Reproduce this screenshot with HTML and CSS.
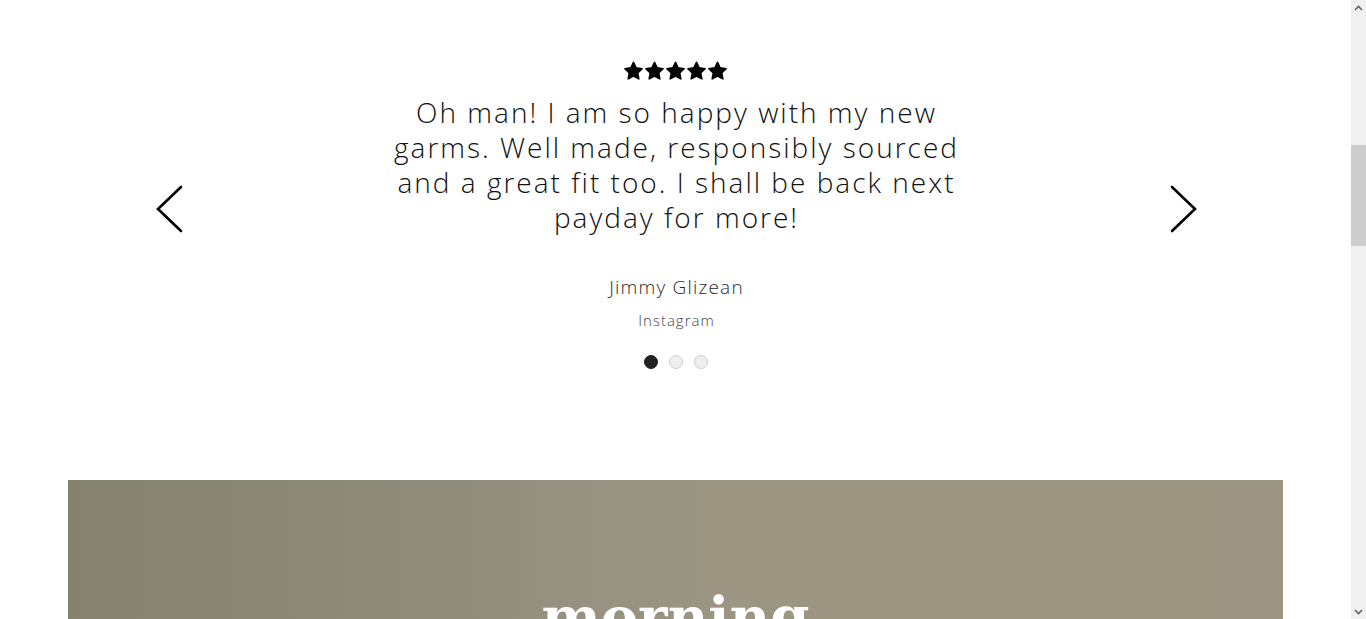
FILE: index.html
```html
<!DOCTYPE html>
<html lang="en">
<head>
<meta charset="utf-8">
<title>Testimonials</title>
<link rel="stylesheet" href="styles.css">
</head>
<body>
<div class="page">
  <main class="main">
    <section class="testimonials">
      <div class="stars" aria-label="5 stars">
        <svg viewBox="0 0 105 20" width="105" height="20">
          <defs>
            <path id="star" d="M10.5 1.4 L13.1 6.9 L19.1 7.7 L14.7 11.9 L15.8 17.9 L10.5 15 L5.2 17.9 L6.3 11.9 L1.9 7.7 L7.9 6.9 Z"/>
          </defs>
          <use href="#star" x="0"/>
          <use href="#star" x="21"/>
          <use href="#star" x="42"/>
          <use href="#star" x="63"/>
          <use href="#star" x="84"/>
        </svg>
      </div>
      <div class="slider">
        <button class="arrow" aria-label="Previous">
          <svg viewBox="0 0 28 48" width="28" height="48"><polyline points="25,2 2,24 25,46" /></svg>
        </button>
        <div class="slide">
          <p class="quote">Oh man! I am so happy with my new<br>garms. Well made, responsibly sourced<br>and a great fit too. I shall be back next<br>payday for more!</p>
          <p class="author">Jimmy Glizean</p>
          <p class="source">Instagram</p>
          <div class="dots">
            <span class="dot active"></span>
            <span class="dot"></span>
            <span class="dot"></span>
          </div>
        </div>
        <button class="arrow" aria-label="Next">
          <svg viewBox="0 0 28 48" width="28" height="48"><polyline points="3,2 26,24 3,46" /></svg>
        </button>
      </div>
    </section>
    <section class="banner">
      <h2 class="banner-title">morning</h2>
    </section>
  </main>
  <div class="scrollbar" aria-hidden="true">
    <div class="sb-btn">
      <svg viewBox="0 0 9 6" width="9" height="6"><polyline points="1,5 4.5,1.5 8,5"/></svg>
    </div>
    <div class="sb-track">
      <div class="sb-thumb"></div>
    </div>
    <div class="sb-btn">
      <svg viewBox="0 0 9 6" width="9" height="6"><polyline points="1,1 4.5,4.5 8,1"/></svg>
    </div>
  </div>
</div>
</body>
</html>
```

FILE: styles.css
```css
html, body {
  margin: 0;
  padding: 0;
  background: #fff;
}

body {
  font-family: "Open Sans", "Liberation Sans", sans-serif;
  color: #222;
  overflow: hidden;
}

.page {
  display: flex;
  height: 619px;
  overflow: hidden;
}

.main {
  flex: 1;
  min-width: 0;
  display: flex;
  flex-direction: column;
}

.testimonials {
  flex: 0 0 auto;
  padding-top: 61px;
  display: flex;
  flex-direction: column;
  align-items: center;
  height: 480px;
  box-sizing: border-box;
}

.stars {
  height: 20px;
  display: flex;
  justify-content: center;
}

.stars svg {
  display: block;
  fill: #000;
  stroke: #000;
  stroke-width: 1.6;
  stroke-linejoin: round;
}

.slider {
  width: 100%;
  display: flex;
  justify-content: space-between;
  align-items: flex-start;
  padding: 0 154px 0 156px;
  box-sizing: border-box;
}

.arrow {
  margin-top: 104px;
  padding: 0;
  border: 0;
  background: none;
  width: 28px;
  height: 48px;
}

.arrow svg {
  display: block;
  fill: none;
  stroke: #000;
  stroke-width: 2.6;
  stroke-linecap: round;
  stroke-linejoin: miter;
}

.slide {
  display: flex;
  flex-direction: column;
  align-items: center;
  text-align: center;
}

.quote {
  margin: 14px 0 0;
  font-size: 28px;
  font-weight: 300;
  line-height: 35px;
  letter-spacing: 2px;
  color: #111;
}

.author {
  margin: 40px 0 0;
  font-size: 19px;
  font-weight: 300;
  line-height: 24px;
  letter-spacing: 1.2px;
  color: #2a2a2a;
}

.source {
  margin: 11px 0 0;
  font-size: 15px;
  font-weight: 300;
  line-height: 20px;
  letter-spacing: 1px;
  color: #444;
}

.dots {
  margin-top: 25px;
  display: flex;
  gap: 11px;
  margin-right: 2px;
}

.dot {
  width: 14px;
  height: 14px;
  box-sizing: border-box;
  border-radius: 50%;
  border: 1px solid #cfcfcf;
  background: #eee;
}

.dot.active {
  background: #222;
  border-color: #222;
}

.banner {
  flex: 0 0 auto;
  margin: 0 68px;
  height: 300px;
  background: linear-gradient(90deg, #84816f 0%, #8c8977 22%, #959080 40%, #9b9582 55%, #9c9583 100%);
  display: flex;
  justify-content: center;
}

.banner-title {
  margin: 105px 0 0;
  font-family: "DejaVu Serif", "Liberation Serif", serif;
  font-weight: 700;
  font-size: 56px;
  line-height: 64px;
  color: #fff;
  letter-spacing: 0;
}

.scrollbar {
  width: 15px;
  flex: 0 0 15px;
  background: #f0f0f0;
  display: flex;
  flex-direction: column;
}

.sb-btn {
  height: 15px;
  display: flex;
  align-items: center;
  justify-content: center;
}

.sb-btn svg {
  fill: none;
  stroke: #606060;
  stroke-width: 1.6;
}

.sb-track {
  flex: 1;
  padding-top: 130px;
}

.sb-thumb {
  height: 101px;
  background: #cdcdcd;
}
```
